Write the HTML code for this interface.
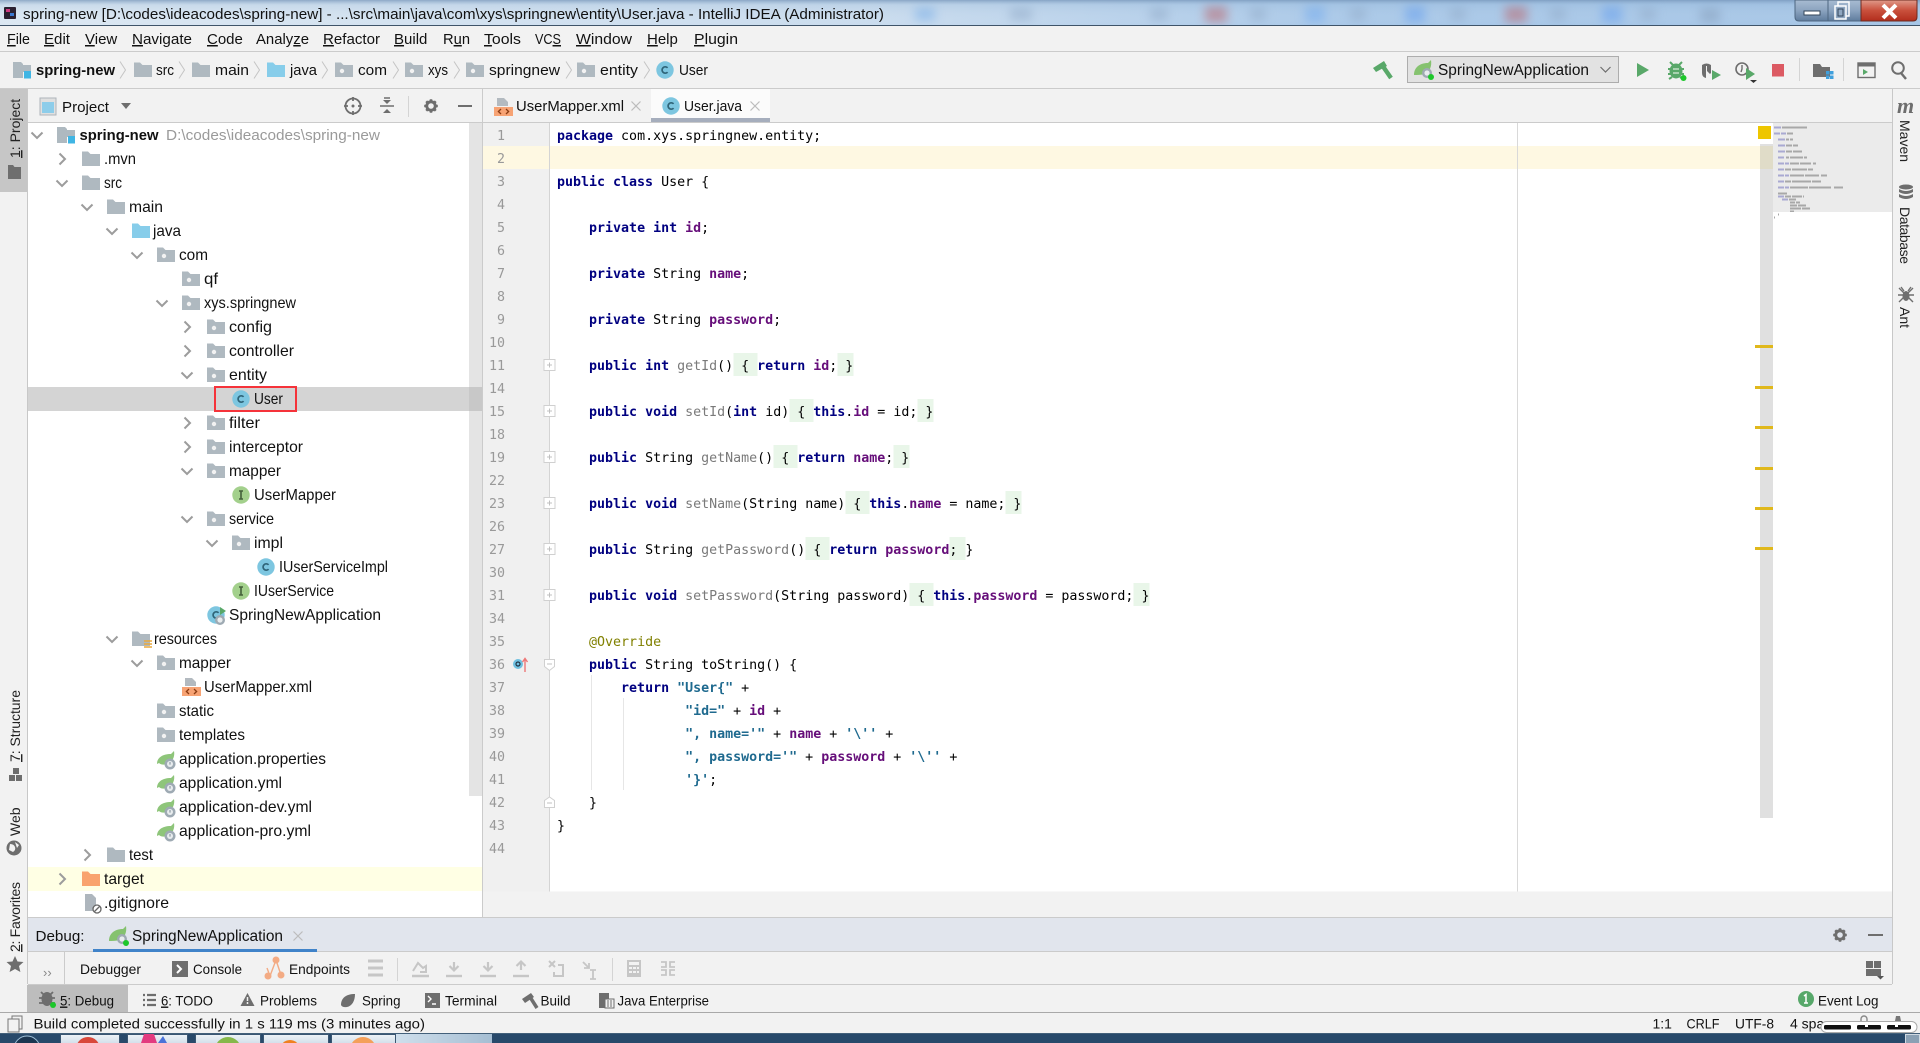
<!DOCTYPE html>
<html><head><meta charset="utf-8"><title>User.java - IntelliJ IDEA</title>
<style>
html,body{margin:0;padding:0;background:#f2f2f2;width:1920px;height:1043px;overflow:hidden}
svg{display:block;font-family:"Liberation Sans",sans-serif;font-size:16px;fill:#111}
.m{font-family:"DejaVu Sans Mono","Liberation Mono",monospace;font-size:13.3px;white-space:pre;fill:#000}
.n{font-family:"DejaVu Sans Mono","Liberation Mono",monospace;font-size:13.3px;fill:#999;text-anchor:end}
.k{fill:#000080;font-weight:bold}.f{fill:#660e7a;font-weight:bold}.s{fill:#1f6a8f;font-weight:bold}.g{fill:#7a7a7a}
.t14{font-size:14px}.t15{font-size:15px}.b{font-weight:bold}
.u{text-decoration:underline}
.v{font-size:14px;fill:#222}
</style></head><body>
<svg width="1920" height="1043" viewBox="0 0 1920 1043" xmlns="http://www.w3.org/2000/svg">
<defs>
<linearGradient id="tb" x1="0" x2="1" y1="0" y2="0"><stop offset="0" stop-color="#dbe7f2"/><stop offset=".45" stop-color="#cadcee"/><stop offset=".7" stop-color="#a9c8e8"/><stop offset="1" stop-color="#a5c5e6"/></linearGradient>
<linearGradient id="tt" x1="0" x2="0" y1="0" y2="1"><stop offset="0" stop-color="#6f8fb4" stop-opacity=".7"/><stop offset=".2" stop-color="#8fb0d0" stop-opacity=".2"/><stop offset="1" stop-color="#fff" stop-opacity="0"/></linearGradient>
<linearGradient id="wb" x1="0" x2="0" y1="0" y2="1"><stop offset="0" stop-color="#a8bcd2"/><stop offset=".5" stop-color="#8ba3bf"/><stop offset="1" stop-color="#5f7c9d"/></linearGradient>
<linearGradient id="wr" x1="0" x2="0" y1="0" y2="1"><stop offset="0" stop-color="#e09a8a"/><stop offset=".5" stop-color="#c9503c"/><stop offset="1" stop-color="#b22d1c"/></linearGradient>
<linearGradient id="tk" x1="0" x2="1" y1="0" y2="0"><stop offset="0" stop-color="#cfdfec"/><stop offset="1" stop-color="#a5bed3"/></linearGradient>
<linearGradient id="ti" x1="0" x2="0" y1="0" y2="1"><stop offset="0" stop-color="#eef3f7"/><stop offset="1" stop-color="#c9d8e6"/></linearGradient>
<filter id="bl" x="-50%" y="-50%" width="200%" height="200%"><feGaussianBlur stdDeviation="5"/></filter>

<path id="cd" d="M-5.5-2.500L0 3 5.500-2.500" fill="none" stroke="#9c9c9c" stroke-width="2"/>
<path id="cr" d="M-2.500-5.500L3 0-2.500 5.500" fill="none" stroke="#9c9c9c" stroke-width="2"/>
<path id="fo" d="M0-7.500h6l2.500 2.500h9.500V7H0z" fill="#afb9c0"/>
<g id="pk"><use href="#fo"/><circle cx="7" cy="1" r="2.200" fill="#f2f2f2"/></g>
<path id="jv" d="M0-7.500h6l2.500 2.500h9.500V7H0z" fill="#87cdea"/>
<path id="tg" d="M0-7.500h6l2.500 2.500h9.500V7H0z" fill="#f9a36e"/>
<g id="rs"><use href="#fo"/><path d="M12 2h8M12 5h8M12 8h8" stroke="#e8a93f" stroke-width="1.600"/></g>
<g id="cl"><circle cx="9" cy="0" r="8.700" fill="#7dc6e0"/><path d="M11.600-2.200A3.200 3.200 0 1 0 11.600 2.200" fill="none" stroke="#2f6478" stroke-width="1.700"/></g>
<g id="in"><circle cx="9" cy="0" r="8.700" fill="#a3d08c"/><path d="M7-4h4M9-4v8M7 4h4" stroke="#44603a" stroke-width="1.600" fill="none"/></g>
<g id="sp"><path d="M0 5C0-1 5-5 14-5c1-1 2-2 3-3 1 5-1 11-7 13-3 1-6 1-8-1z" fill="#8ec57a"/><circle cx="13" cy="5" r="5.500" fill="#9eaab3"/><circle cx="13" cy="5" r="3" fill="#e8ecee"/><path d="M13 3v2.600" stroke="#7d8b96" stroke-width="1"/></g>
<g id="xm"><path d="M3-9h7l4 4v4H3z" fill="#b3bac0"/><rect x="0" y="0" width="19" height="9" fill="#f7a374"/><path d="M7 2l-2.600 2.500L7 7M12 2l2.600 2.500L12 7" fill="none" stroke="#8a3b12" stroke-width="1.300"/></g>
<g id="gt"><path d="M3-9h7l4 4V8H3z" fill="#aeb6bd"/><circle cx="15" cy="6" r="4" fill="#fff" stroke="#666" stroke-width="1.300"/><path d="M12.500 8.500l5-5" stroke="#666" stroke-width="1.300"/></g>
<g id="pr"><path d="M0-8h8l2 2h0v14H0z" fill="#aeb9c0"/><path d="M8-5h10V2H8z" fill="#aeb9c0"/><rect x="11" y="1" width="7" height="7.500" fill="#3fb5e4"/></g>
<path id="nc" d="M-3-8.500L2.500 0-3 8.500" fill="none" stroke="#c4c4c4" stroke-width="1"/>
<path id="xx" d="M-4.500-4.500L4.500 4.500M-4.500 4.500L4.500-4.500" stroke="#bcbcbc" stroke-width="1.200" fill="none"/>
<g id="fp"><rect x="-5.500" y="-5.500" width="11" height="11" fill="#fff" stroke="#d0d0d0"/><path d="M-2.500 0h5M0-2.500v5" stroke="#c0c0c0"/></g>
<g id="spr"><path d="M-9 6C-9-1-4-6 5-6c1-1 2-2 3-3 1 6-1 12-7 14-3 1-7 1-10 1z" fill="#85c26f"/><circle cx="4" cy="4" r="5" fill="#9eaab3"/><circle cx="4" cy="4" r="2.600" fill="#e8ecee"/><circle cx="8" cy="8" r="3" fill="#1dc72b"/></g>
<g id="gear"><circle r="5" fill="none" stroke="#6e6e6e" stroke-width="3.400"/><path d="M0-8v3M0 8V5M-8 0h3M8 0H5M-5.600-5.600l2 2M5.600 5.600l-2-2M-5.600 5.600l2-2M5.600-5.600l-2 2" stroke="#6e6e6e" stroke-width="3"/></g>
<g id="dn"><path d="M0-8V0M-4.500-4L0 .5 4.500-4" fill="none" stroke="#c6c6c6" stroke-width="2.200"/><path d="M-8 6h16" stroke="#c6c6c6" stroke-width="2.400"/></g>
</defs>

<!-- backgrounds -->
<rect width="1920" height="1043" fill="#f2f2f2"/>
<!-- title bar -->
<rect width="1920" height="25" fill="url(#tb)"/>
<g filter="url(#bl)" opacity=".55">
<rect x="915" y="8" width="20" height="12" fill="#6ca7e8"/><rect x="1010" y="8" width="22" height="12" fill="#8aa4c4"/><rect x="1205" y="6" width="22" height="16" fill="#b85a60"/><rect x="1305" y="6" width="20" height="16" fill="#6ca7f0"/><rect x="1405" y="6" width="20" height="16" fill="#5c9af0"/><rect x="1505" y="6" width="22" height="16" fill="#b85a60"/><rect x="1602" y="6" width="20" height="16" fill="#5c9af0"/><rect x="1700" y="8" width="20" height="14" fill="#7f99b8"/><rect x="1150" y="8" width="18" height="12" fill="#8aa4c4"/><rect x="1250" y="8" width="16" height="12" fill="#8aa4c4"/><rect x="1350" y="8" width="16" height="12" fill="#8aa4c4"/><rect x="1450" y="8" width="16" height="12" fill="#8aa4c4"/><rect x="1550" y="8" width="16" height="12" fill="#8aa4c4"/><rect x="1640" y="8" width="16" height="12" fill="#8aa4c4"/>
</g>
<rect width="1920" height="25" fill="url(#tt)"/>
<rect y="25" width="1920" height="1" fill="#3f5469"/>
<rect x="4" y="7" width="12" height="12" rx="1" fill="#2a2030"/><rect x="6" y="9" width="4" height="3" fill="#d03a80"/><rect x="10" y="13" width="4" height="3" fill="#3a78d0"/>
<text x="23" y="19" class="t15" textLength="861" lengthAdjust="spacingAndGlyphs">spring-new [D:\codes\ideacodes\spring-new] - ...\src\main\java\com\xys\springnew\entity\User.java - IntelliJ IDEA (Administrator)</text>
<!-- window buttons -->
<path d="M1795 0V17q0 4 4 4H1861V0z" fill="url(#wb)" stroke="#4d6680"/>
<path d="M1861 0V21H1913q4 0 4-4V0z" fill="url(#wr)" stroke="#6d2a20"/>
<path d="M1828 0V21" stroke="#4d6680"/>
<rect x="1804" y="11" width="16" height="4" fill="#fff" stroke="#33465a"/>
<rect x="1838" y="2" width="11" height="14" fill="none" stroke="#fff" stroke-width="1.500"/><rect x="1835" y="6" width="11" height="13" fill="#8fa7c1" stroke="#fff" stroke-width="1.500"/><rect x="1838" y="9" width="5" height="7" fill="none" stroke="#33465a"/>
<path d="M1883 5l13 13M1896 5l-13 13" stroke="#fff" stroke-width="4" fill="none"/>

<!-- menu -->
<rect y="26" width="1920" height="25" fill="#f2f2f2"/>
<rect y="51" width="1920" height="1" fill="#cbcbcb"/>
<g class="t15">
<text x="7" y="44" textLength="23" lengthAdjust="spacingAndGlyphs"><tspan class="u">F</tspan>ile</text>
<text x="44" y="44" textLength="26" lengthAdjust="spacingAndGlyphs"><tspan class="u">E</tspan>dit</text>
<text x="85" y="44"><tspan class="u">V</tspan>iew</text>
<text x="132" y="44" textLength="60" lengthAdjust="spacingAndGlyphs"><tspan class="u">N</tspan>avigate</text>
<text x="207" y="44"><tspan class="u">C</tspan>ode</text>
<text x="256" y="44" textLength="53" lengthAdjust="spacingAndGlyphs">Analy<tspan class="u">z</tspan>e</text>
<text x="323" y="44" textLength="57" lengthAdjust="spacingAndGlyphs"><tspan class="u">R</tspan>efactor</text>
<text x="394" y="44"><tspan class="u">B</tspan>uild</text>
<text x="443" y="44" textLength="27" lengthAdjust="spacingAndGlyphs">R<tspan class="u">u</tspan>n</text>
<text x="484" y="44" textLength="37" lengthAdjust="spacingAndGlyphs"><tspan class="u">T</tspan>ools</text>
<text x="535" y="44" textLength="26" lengthAdjust="spacingAndGlyphs">VC<tspan class="u">S</tspan></text>
<text x="576" y="44" textLength="56" lengthAdjust="spacingAndGlyphs"><tspan class="u">W</tspan>indow</text>
<text x="647" y="44"><tspan class="u">H</tspan>elp</text>
<text x="694" y="44" textLength="44" lengthAdjust="spacingAndGlyphs"><tspan class="u">P</tspan>lugin</text>
</g>

<!-- navbar -->
<rect y="88" width="1920" height="1" fill="#cbcbcb"/>
<use href="#pr" x="13" y="70"/>
<text x="36" y="75" class="b" font-size="15" textLength="79" lengthAdjust="spacingAndGlyphs">spring-new</text>
<use href="#nc" x="123" y="70"/>
<use href="#fo" x="134" y="70"/><text x="156" y="75" font-size="15" textLength="18" lengthAdjust="spacingAndGlyphs">src</text>
<use href="#nc" x="182" y="70"/>
<use href="#fo" x="192" y="70"/><text x="215" y="75" font-size="15" textLength="34" lengthAdjust="spacingAndGlyphs">main</text>
<use href="#nc" x="257" y="70"/>
<use href="#jv" x="267" y="70"/><text x="290" y="75" font-size="15" textLength="27" lengthAdjust="spacingAndGlyphs">java</text>
<use href="#nc" x="325" y="70"/>
<use href="#pk" x="335" y="70"/><text x="358" y="75" font-size="15" textLength="29" lengthAdjust="spacingAndGlyphs">com</text>
<use href="#nc" x="396" y="70"/>
<use href="#pk" x="405" y="70"/><text x="428" y="75" font-size="15" textLength="20" lengthAdjust="spacingAndGlyphs">xys</text>
<use href="#nc" x="457" y="70"/>
<use href="#pk" x="466" y="70"/><text x="489" y="75" font-size="15" textLength="71" lengthAdjust="spacingAndGlyphs">springnew</text>
<use href="#nc" x="569" y="70"/>
<use href="#pk" x="577" y="70"/><text x="600" y="75" font-size="15" textLength="38" lengthAdjust="spacingAndGlyphs">entity</text>
<use href="#nc" x="647" y="70"/>
<use href="#cl" x="656" y="70"/><text x="679" y="75" font-size="15" textLength="29" lengthAdjust="spacingAndGlyphs">User</text>

<!-- nav right -->
<path d="M1382 65l9 13" stroke="#59a869" stroke-width="4.400" fill="none"/><path d="M1373 68l11-7 3 5-11 6z" fill="#59a869"/>
<rect x="1407.500" y="56.500" width="211" height="26" fill="#e2e2e2" stroke="#adadad"/>
<use href="#spr" x="1423" y="69"/>
<text x="1438" y="75" font-size="15.500" textLength="151" lengthAdjust="spacingAndGlyphs">SpringNewApplication</text>
<path d="M1600.500 67l5 5 5-5" fill="none" stroke="#6e6e6e" stroke-width="1.200"/>
<path d="M1637 63l12 7-12 7z" fill="#59a869"/>
<path d="M1670 62l3 3M1682 62l-3 3M1668 69h16M1668 74h16M1669 79l3-2M1683 79l-3-2" stroke="#59a869" stroke-width="2" fill="none"/><ellipse cx="1676" cy="71" rx="6.500" ry="7.500" fill="#59a869"/><path d="M1673 69h6M1673 73h6" stroke="#d8ecd9" stroke-width="1.300"/><circle cx="1683.500" cy="78" r="3" fill="#1dc72b"/>
<path d="M1702 65q4.500-3 9 0v8l-1 1-3-3v-5h-1v12q-4-1-4-5z" fill="#6e6e6e"/><path d="M1712 70l9 5-9 5z" fill="#59a869"/>
<circle cx="1742" cy="69" r="6" fill="none" stroke="#6e6e6e" stroke-width="1.600"/><path d="M1742 65v4l-1 3" fill="none" stroke="#6e6e6e" stroke-width="1.400"/><path d="M1746 68l9 6-9 6z" fill="#59a869"/><path d="M1750 80h7l-3.500 3z" fill="#333"/>
<rect x="1772" y="64" width="12" height="12.500" fill="#dc5a63"/>
<rect x="1799" y="58" width="1" height="23" fill="#d4d4d4"/>
<path d="M1813 64h7l2 3h8v10h-17z" fill="#6e6e6e"/><path d="M1826 71h3.500v3.500h-3.500zM1830 71h3.500v3.500h-3.500zM1826 75.500h3.500v3.500h-3.500zM1830 75.500h3.500v3.500h-3.500z" fill="#40a0dd"/>
<rect x="1843" y="58" width="1" height="23" fill="#d4d4d4"/>
<rect x="1858" y="63" width="17" height="14.500" fill="none" stroke="#6e6e6e" stroke-width="1.400"/><rect x="1858" y="63" width="17" height="3.500" fill="#6e6e6e"/><path d="M1863 69l5 3-5 3z" fill="#59a869"/>
<circle cx="1898" cy="68" r="5.800" fill="none" stroke="#6e6e6e" stroke-width="2"/><path d="M1901 73l5 6" stroke="#6e6e6e" stroke-width="2.400"/>

<!-- left stripe -->
<rect x="0" y="89" width="27" height="103" fill="#c6c6c6"/>
<rect x="27" y="89" width="1" height="895" fill="#c8c8c8"/>
<text class="v" transform="translate(20,158) rotate(-90)"><tspan class="u">1</tspan>: Project</text>
<path d="M8 165h5l1.500 2h6.500v12H8z" fill="#6e6e6e"/>
<text class="v" transform="translate(20,762) rotate(-90)" textLength="72"><tspan class="u">7</tspan>: Structure</text>
<path d="M13 768h6v6h-6zM9 775h6v6H9zM16 775h6v6h-6z" fill="#6e6e6e"/>
<text class="v" transform="translate(20,836) rotate(-90)">Web</text>
<circle cx="14" cy="848" r="7.500" fill="#6e6e6e"/><path d="M10 844q4 0 5 3t-2 5l-4-2zM15 842l4 3-2 3z" fill="#f2f2f2"/>
<text class="v" transform="translate(20,952) rotate(-90)" textLength="70"><tspan class="u">2</tspan>: Favorites</text>
<path d="M15 956l2.500 5.500 6 .5-4.500 4 1.400 6L15 969l-5.400 3 1.400-6-4.500-4 6-.5z" fill="#6e6e6e"/>

<!-- right stripe -->
<rect x="1892" y="89" width="1" height="895" fill="#c8c8c8"/>
<text x="1897" y="113" font-size="22" font-weight="bold" font-style="italic" style="font-family:'Liberation Serif',serif;fill:#6e6e6e">m</text>
<text class="v" transform="translate(1900,120) rotate(90)">Maven</text>
<g fill="#6e6e6e"><ellipse cx="1906" cy="187" rx="7" ry="2.500"/><path d="M1899 189q7 4 14 0v3q-7 4-14 0zM1899 194q7 4 14 0v3q-7 4-14 0z"/></g>
<text class="v" transform="translate(1900,207) rotate(90)" textLength="57">Database</text>
<g fill="#6e6e6e"><ellipse cx="1906" cy="296" rx="3.500" ry="5"/><path d="M1899 288l14 14M1913 288l-14 14M1898 295h16M1901 287l3 4M1911 287l-3 4" stroke="#6e6e6e" stroke-width="1.400"/></g>
<text class="v" transform="translate(1900,307) rotate(90)">Ant</text>

<!-- project header -->
<rect x="40" y="98" width="16" height="17" fill="#e0e0e0" stroke="#aeb4ba"/><rect x="42" y="102" width="12" height="11" fill="#8dcdea"/>
<text x="62" y="112" font-size="15" textLength="47" lengthAdjust="spacingAndGlyphs">Project</text>
<path d="M121 103h10l-5 6z" fill="#6e6e6e"/>
<circle cx="353" cy="106" r="7.500" fill="none" stroke="#6e6e6e" stroke-width="1.800"/><circle cx="353" cy="106" r="1.500" fill="#6e6e6e"/><path d="M353 97v4M353 111v4M344 106h4M358 106h4" stroke="#6e6e6e" stroke-width="1.800"/>
<path d="M380 106h14M384 98h6" stroke="#6e6e6e" stroke-width="1.600"/><path d="M383 100h8l-4 4zM383 113h8l-4-4z" fill="#6e6e6e"/>
<rect x="408" y="96" width="1" height="21" fill="#d4d4d4"/>
<g transform="translate(431,106) scale(.85)"><use href="#gear"/></g>
<rect x="458" y="105" width="14" height="2" fill="#6e6e6e"/>
<rect x="28" y="122" width="454" height="1" fill="#cbcbcb"/>
<!-- tree -->
<rect x="28" y="123" width="454" height="794" fill="#fff"/>
<rect x="469" y="123" width="13" height="673" fill="#e4e4e4"/>
<rect x="28" y="387" width="454" height="24" fill="#d4d4d4"/>
<rect x="469" y="387" width="13" height="24" fill="#c8c8c8"/>
<rect x="28" y="867" width="454" height="24" fill="#ffffe4"/>
<rect x="482" y="89" width="1" height="828" fill="#cbcbcb"/>
<g>
<use href="#cd" x="37" y="135"/><use href="#pr" x="57" y="135"/><text x="79.500" y="140" class="b" font-size="15" textLength="79" lengthAdjust="spacingAndGlyphs">spring-new</text><text x="166" y="140" font-size="15" fill="#9a9a9a" style="fill:#9a9a9a" textLength="214" lengthAdjust="spacingAndGlyphs">D:\codes\ideacodes\spring-new</text>
<use href="#cr" x="62" y="159"/><use href="#fo" x="82" y="159"/><text x="104" y="164" textLength="32" lengthAdjust="spacingAndGlyphs">.mvn</text>
<use href="#cd" x="62" y="183"/><use href="#fo" x="82" y="183"/><text x="104" y="188" textLength="18" lengthAdjust="spacingAndGlyphs">src</text>
<use href="#cd" x="87" y="207"/><use href="#fo" x="107" y="207"/><text x="129" y="212" textLength="34" lengthAdjust="spacingAndGlyphs">main</text>
<use href="#cd" x="112" y="231"/><use href="#jv" x="132" y="231"/><text x="153" y="236" textLength="28" lengthAdjust="spacingAndGlyphs">java</text>
<use href="#cd" x="137" y="255"/><use href="#pk" x="157" y="255"/><text x="179" y="260" textLength="29" lengthAdjust="spacingAndGlyphs">com</text>
<use href="#pk" x="182" y="279"/><text x="204" y="284" textLength="14" lengthAdjust="spacingAndGlyphs">qf</text>
<use href="#cd" x="162" y="303"/><use href="#pk" x="182" y="303"/><text x="204" y="308" textLength="92" lengthAdjust="spacingAndGlyphs">xys.springnew</text>
<use href="#cr" x="187" y="327"/><use href="#pk" x="207" y="327"/><text x="229" y="332" textLength="43" lengthAdjust="spacingAndGlyphs">config</text>
<use href="#cr" x="187" y="351"/><use href="#pk" x="207" y="351"/><text x="229" y="356" textLength="65" lengthAdjust="spacingAndGlyphs">controller</text>
<use href="#cd" x="187" y="375"/><use href="#pk" x="207" y="375"/><text x="229" y="380" textLength="38" lengthAdjust="spacingAndGlyphs">entity</text>
<use href="#cl" x="232" y="399"/><text x="254" y="404" textLength="29" lengthAdjust="spacingAndGlyphs">User</text>
<use href="#cr" x="187" y="423"/><use href="#pk" x="207" y="423"/><text x="229" y="428" textLength="31" lengthAdjust="spacingAndGlyphs">filter</text>
<use href="#cr" x="187" y="447"/><use href="#pk" x="207" y="447"/><text x="229" y="452" textLength="74" lengthAdjust="spacingAndGlyphs">interceptor</text>
<use href="#cd" x="187" y="471"/><use href="#pk" x="207" y="471"/><text x="229" y="476" textLength="52" lengthAdjust="spacingAndGlyphs">mapper</text>
<use href="#in" x="232" y="495"/><text x="254" y="500" textLength="82" lengthAdjust="spacingAndGlyphs">UserMapper</text>
<use href="#cd" x="187" y="519"/><use href="#pk" x="207" y="519"/><text x="229" y="524" textLength="45" lengthAdjust="spacingAndGlyphs">service</text>
<use href="#cd" x="212" y="543"/><use href="#pk" x="232" y="543"/><text x="254" y="548" textLength="29" lengthAdjust="spacingAndGlyphs">impl</text>
<use href="#cl" x="257" y="567"/><text x="279" y="572" textLength="109" lengthAdjust="spacingAndGlyphs">IUserServiceImpl</text>
<use href="#in" x="232" y="591"/><text x="254" y="596" textLength="80" lengthAdjust="spacingAndGlyphs">IUserService</text>
<use href="#cl" x="207" y="615"/><path d="M220 607l6 4-6 4z" fill="#59a869"/><circle cx="220" cy="620" r="5" fill="#9eaab3"/><circle cx="220" cy="620" r="2.600" fill="#e8ecee"/><text x="229" y="620" textLength="152" lengthAdjust="spacingAndGlyphs">SpringNewApplication</text>
<use href="#cd" x="112" y="639"/><use href="#rs" x="132" y="639"/><text x="154" y="644" textLength="63" lengthAdjust="spacingAndGlyphs">resources</text>
<use href="#cd" x="137" y="663"/><use href="#pk" x="157" y="663"/><text x="179" y="668" textLength="52" lengthAdjust="spacingAndGlyphs">mapper</text>
<use href="#xm" x="182" y="687"/><text x="204" y="692" textLength="108" lengthAdjust="spacingAndGlyphs">UserMapper.xml</text>
<use href="#pk" x="157" y="711"/><text x="179" y="716" textLength="35" lengthAdjust="spacingAndGlyphs">static</text>
<use href="#pk" x="157" y="735"/><text x="179" y="740" textLength="66" lengthAdjust="spacingAndGlyphs">templates</text>
<use href="#sp" x="157" y="759"/><text x="179" y="764" textLength="147" lengthAdjust="spacingAndGlyphs">application.properties</text>
<use href="#sp" x="157" y="783"/><text x="179" y="788" textLength="103" lengthAdjust="spacingAndGlyphs">application.yml</text>
<use href="#sp" x="157" y="807"/><text x="179" y="812" textLength="133" lengthAdjust="spacingAndGlyphs">application-dev.yml</text>
<use href="#sp" x="157" y="831"/><text x="179" y="836" textLength="132" lengthAdjust="spacingAndGlyphs">application-pro.yml</text>
<use href="#cr" x="87" y="855"/><use href="#fo" x="107" y="855"/><text x="129" y="860" textLength="24" lengthAdjust="spacingAndGlyphs">test</text>
<use href="#cr" x="62" y="879"/><use href="#tg" x="82" y="879"/><text x="104" y="884" textLength="40" lengthAdjust="spacingAndGlyphs">target</text>
<use href="#gt" x="82" y="903"/><text x="104" y="908" textLength="65" lengthAdjust="spacingAndGlyphs">.gitignore</text>
</g>
<rect x="215" y="387" width="81" height="24" fill="none" stroke="#f5333a" stroke-width="2"/>

<!-- editor tabs -->
<use href="#xm" x="494" y="107"/>
<text x="516" y="111" font-size="15" textLength="108" lengthAdjust="spacingAndGlyphs">UserMapper.xml</text>
<use href="#xx" x="636" y="106"/>
<rect x="651" y="89" width="119" height="29" fill="#fbfbfb"/>
<rect x="651" y="118" width="119" height="4.500" fill="#a6aebd"/>
<use href="#cl" x="662" y="106"/>
<text x="684" y="111" font-size="15" textLength="58" lengthAdjust="spacingAndGlyphs">User.java</text>
<use href="#xx" x="755" y="106"/>
<rect x="483" y="122" width="1409" height="1" fill="#cbcbcb"/>

<!-- editor -->
<rect x="483" y="123" width="1409" height="768.500" fill="#fff"/>
<rect x="483" y="123" width="66" height="768.500" fill="#f0f0f0"/>
<rect x="549" y="123" width="1" height="768.500" fill="#d4d4d4"/>
<rect x="483" y="146" width="66" height="23" fill="#fef8e2"/>
<rect x="550" y="146" width="1210" height="23" fill="#fef8e2"/>
<rect x="1517" y="123" width="1" height="768.500" fill="#d9d9d9"/>
<!-- folded green bgs -->
<g fill="#e9f6e9">
<rect x="733.500" y="353" width="24" height="23"/><rect x="837.500" y="353" width="16" height="23"/>
<rect x="789.500" y="399" width="24" height="23"/><rect x="917.500" y="399" width="16" height="23"/>
<rect x="773.500" y="445" width="24" height="23"/><rect x="893.500" y="445" width="16" height="23"/>
<rect x="845.500" y="491" width="24" height="23"/><rect x="1005.500" y="491" width="16" height="23"/>
<rect x="805.500" y="537" width="24" height="23"/><rect x="949.500" y="537" width="16" height="23"/>
<rect x="909.500" y="583" width="24" height="23"/><rect x="1133.500" y="583" width="16" height="23"/>
</g>
<rect x="591" y="675" width="1" height="115" fill="#e6e6e6"/><rect x="623" y="698" width="1" height="92" fill="#e6e6e6"/>
<!-- line numbers -->
<g>
<text class="n" x="505" y="140">1</text><text class="n" x="505" y="163">2</text><text class="n" x="505" y="186">3</text><text class="n" x="505" y="209">4</text><text class="n" x="505" y="232">5</text><text class="n" x="505" y="255">6</text><text class="n" x="505" y="278">7</text><text class="n" x="505" y="301">8</text><text class="n" x="505" y="324">9</text><text class="n" x="505" y="347">10</text><text class="n" x="505" y="370">11</text><text class="n" x="505" y="393">14</text><text class="n" x="505" y="416">15</text><text class="n" x="505" y="439">18</text><text class="n" x="505" y="462">19</text><text class="n" x="505" y="485">22</text><text class="n" x="505" y="508">23</text><text class="n" x="505" y="531">26</text><text class="n" x="505" y="554">27</text><text class="n" x="505" y="577">30</text><text class="n" x="505" y="600">31</text><text class="n" x="505" y="623">34</text><text class="n" x="505" y="646">35</text><text class="n" x="505" y="669">36</text><text class="n" x="505" y="692">37</text><text class="n" x="505" y="715">38</text><text class="n" x="505" y="738">39</text><text class="n" x="505" y="761">40</text><text class="n" x="505" y="784">41</text><text class="n" x="505" y="807">42</text><text class="n" x="505" y="830">43</text><text class="n" x="505" y="853">44</text>
</g>
<!-- fold marks -->
<use href="#fp" x="549.500" y="365"/><use href="#fp" x="549.500" y="411"/><use href="#fp" x="549.500" y="457"/><use href="#fp" x="549.500" y="503"/><use href="#fp" x="549.500" y="549"/><use href="#fp" x="549.500" y="595"/>
<path d="M544.500 659.500h10v7l-5 4-5-4z" fill="#fff" stroke="#d0d0d0"/><path d="M547 664h5" stroke="#c0c0c0"/>
<path d="M544.500 807.500v-7l5-3.500 5 3.500v7z" fill="#fff" stroke="#d0d0d0"/><path d="M547 803h5" stroke="#c0c0c0"/>
<circle cx="518" cy="664" r="5" fill="#6fc0e0"/><circle cx="518" cy="664" r="2" fill="none" stroke="#234" stroke-width="1.200"/><path d="M525 672v-13M522.500 662l2.500-3.500 2.500 3.500" fill="none" stroke="#e77" stroke-width="1.400"/>
<!-- code -->
<g class="m">
<text class="m" x="557" y="140"><tspan class="k">package</tspan> com.xys.springnew.entity;</text>
<text class="m" x="557" y="186"><tspan class="k">public class</tspan> User {</text>
<text class="m" x="557" y="232">    <tspan class="k">private int</tspan> <tspan class="f">id</tspan>;</text>
<text class="m" x="557" y="278">    <tspan class="k">private</tspan> String <tspan class="f">name</tspan>;</text>
<text class="m" x="557" y="324">    <tspan class="k">private</tspan> String <tspan class="f">password</tspan>;</text>
<text class="m" x="557" y="370">    <tspan class="k">public int</tspan> <tspan class="g">getId</tspan>() { <tspan class="k">return</tspan> <tspan class="f">id</tspan>; }</text>
<text class="m" x="557" y="416">    <tspan class="k">public void</tspan> <tspan class="g">setId</tspan>(<tspan class="k">int</tspan> id) { <tspan class="k">this</tspan>.<tspan class="f">id</tspan> = id; }</text>
<text class="m" x="557" y="462">    <tspan class="k">public</tspan> String <tspan class="g">getName</tspan>() { <tspan class="k">return</tspan> <tspan class="f">name</tspan>; }</text>
<text class="m" x="557" y="508">    <tspan class="k">public void</tspan> <tspan class="g">setName</tspan>(String name) { <tspan class="k">this</tspan>.<tspan class="f">name</tspan> = name; }</text>
<text class="m" x="557" y="554">    <tspan class="k">public</tspan> String <tspan class="g">getPassword</tspan>() { <tspan class="k">return</tspan> <tspan class="f">password</tspan>; }</text>
<text class="m" x="557" y="600">    <tspan class="k">public void</tspan> <tspan class="g">setPassword</tspan>(String password) { <tspan class="k">this</tspan>.<tspan class="f">password</tspan> = password; }</text>
<text class="m" x="557" y="646">    <tspan style="fill:#808000">@Override</tspan></text>
<text class="m" x="557" y="669">    <tspan class="k">public</tspan> String toString() {</text>
<text class="m" x="557" y="692">        <tspan class="k">return</tspan> <tspan class="s">"User{"</tspan> +</text>
<text class="m" x="557" y="715">                <tspan class="s">"id="</tspan> + <tspan class="f">id</tspan> +</text>
<text class="m" x="557" y="738">                <tspan class="s">", name='"</tspan> + <tspan class="f">name</tspan> + <tspan class="s">'\''</tspan> +</text>
<text class="m" x="557" y="761">                <tspan class="s">", password='"</tspan> + <tspan class="f">password</tspan> + <tspan class="s">'\''</tspan> +</text>
<text class="m" x="557" y="784">                <tspan class="s">'}'</tspan>;</text>
<text class="m" x="557" y="807">    }</text>
<text class="m" x="557" y="830">}</text>
</g>

<!-- editor scrollbar + minimap -->
<rect x="1773" y="123" width="119" height="89" fill="#ebebeb"/>
<rect x="1760" y="144" width="13" height="674" fill="#e0e0e0"/>
<rect x="1760" y="146" width="13" height="23" fill="#e0dcc8"/>
<rect x="1758" y="126" width="13" height="13" fill="#eec600"/>
<g fill="#e0b81c"><rect x="1755" y="345" width="18" height="3"/><rect x="1755" y="386" width="18" height="3"/><rect x="1755" y="426" width="18" height="3"/><rect x="1755" y="467" width="18" height="3"/><rect x="1755" y="507" width="18" height="3"/><rect x="1755" y="547" width="18" height="3"/></g>
<g fill="#a9a9d2">
<rect x="1774" y="126.500" width="7" height="2"/><rect x="1774" y="132.500" width="6" height="2"/><rect x="1781" y="132.500" width="5" height="2"/><rect x="1778" y="138.500" width="7" height="2"/><rect x="1778" y="144.500" width="7" height="2"/><rect x="1778" y="150.500" width="7" height="2"/><rect x="1778" y="156.500" width="6" height="2"/><rect x="1778" y="162.500" width="6" height="2"/><rect x="1785" y="162.500" width="4" height="2"/><rect x="1778" y="168.500" width="6" height="2"/><rect x="1778" y="174.500" width="6" height="2"/><rect x="1785" y="174.500" width="4" height="2"/><rect x="1778" y="180.500" width="6" height="2"/><rect x="1778" y="186.500" width="6" height="2"/><rect x="1785" y="186.500" width="4" height="2"/><rect x="1778" y="195.500" width="6" height="2"/><rect x="1782" y="198.500" width="6" height="2"/>
</g>
<g fill="#a8a8a8">
<rect x="1782" y="126.500" width="25" height="2"/><rect x="1787" y="132.500" width="5" height="2"/><rect x="1792" y="132.500" width="1" height="2"/><rect x="1786" y="138.500" width="3" height="2"/><rect x="1790" y="138.500" width="3" height="2"/><rect x="1786" y="144.500" width="6" height="2"/><rect x="1793" y="144.500" width="5" height="2"/><rect x="1786" y="150.500" width="6" height="2"/><rect x="1793" y="150.500" width="9" height="2"/><rect x="1786" y="156.500" width="3" height="2"/><rect x="1790" y="156.500" width="13" height="2"/><rect x="1804" y="156.500" width="3" height="2"/><rect x="1790" y="162.500" width="9" height="2"/><rect x="1800" y="162.500" width="11" height="2"/><rect x="1813" y="162.500" width="3" height="2"/><rect x="1785" y="168.500" width="6" height="2"/><rect x="1792" y="168.500" width="15" height="2"/><rect x="1808" y="168.500" width="5" height="2"/><rect x="1790" y="174.500" width="14" height="2"/><rect x="1805" y="174.500" width="14" height="2"/><rect x="1821" y="174.500" width="6" height="2"/><rect x="1785" y="180.500" width="6" height="2"/><rect x="1792" y="180.500" width="19" height="2"/><rect x="1812" y="180.500" width="9" height="2"/><rect x="1790" y="186.500" width="18" height="2"/><rect x="1809" y="186.500" width="22" height="2"/><rect x="1834" y="186.500" width="9" height="2"/><rect x="1778" y="192.500" width="9" height="2"/><rect x="1785" y="195.500" width="6" height="2"/><rect x="1792" y="195.500" width="10" height="2"/><rect x="1803" y="195.500" width="1" height="2"/><rect x="1789" y="198.500" width="7" height="2"/><rect x="1790" y="201.500" width="5" height="2"/><rect x="1796" y="201.500" width="4" height="2"/><rect x="1790" y="204.500" width="7" height="2"/><rect x="1798" y="204.500" width="8" height="2"/><rect x="1790" y="207.500" width="11" height="2"/><rect x="1802" y="207.500" width="8" height="2"/><rect x="1790" y="210.500" width="4" height="1.500"/><rect x="1778" y="213.500" width="1" height="2"/><rect x="1774" y="216.500" width="1" height="2"/>
</g>

<!-- lower divider -->
<rect x="28" y="917" width="1864" height="1" fill="#cbcbcb"/>
<!-- debug header -->
<rect x="28" y="918" width="1864" height="33" fill="#e1e5ed"/>
<rect x="28" y="951" width="1864" height="1" fill="#cbcbcb"/>
<text x="35.500" y="941" font-size="15" textLength="49" lengthAdjust="spacingAndGlyphs">Debug:</text>
<use href="#spr" x="118" y="935"/>
<text x="132" y="941" font-size="15.500" textLength="151" lengthAdjust="spacingAndGlyphs">SpringNewApplication</text>
<use href="#xx" x="298" y="936"/>
<rect x="93" y="949" width="224" height="3" fill="#4083c9"/>
<g transform="translate(1840,935) scale(.85)"><use href="#gear"/></g>
<rect x="1868" y="934" width="15" height="2" fill="#6e6e6e"/>

<!-- debug toolbar -->
<rect x="28" y="984" width="1864" height="1" fill="#cbcbcb"/>
<text x="43" y="977" font-size="13" style="fill:#888">››</text>
<rect x="64" y="952" width="1" height="32" fill="#cbcbcb"/>
<text x="80" y="974" class="t14" textLength="61" lengthAdjust="spacingAndGlyphs">Debugger</text>
<rect x="172" y="961" width="16" height="16" fill="#6e6e6e"/><path d="M177 965l4 4-4 4" fill="none" stroke="#fff" stroke-width="2"/>
<text x="193" y="974" class="t14" textLength="49" lengthAdjust="spacingAndGlyphs">Console</text>
<g fill="#f3ab84"><circle cx="276" cy="960" r="3.500"/><circle cx="268" cy="976" r="3.500"/><circle cx="281" cy="975" r="3.500"/></g><path d="M267 968l3 8 6-16 5 15" fill="none" stroke="#f3ab84" stroke-width="1.400"/>
<text x="289" y="974" class="t14" textLength="61" lengthAdjust="spacingAndGlyphs">Endpoints</text>
<path d="M368 961h15M368 968h15M368 975h15" stroke="#c6c6c6" stroke-width="3"/>
<rect x="397" y="958" width="1" height="23" fill="#d4d4d4"/>
<path d="M413 971l5-8 5 5 3-2v6h-6" fill="none" stroke="#c6c6c6" stroke-width="2"/><path d="M412 976h17" stroke="#c6c6c6" stroke-width="2.400"/>
<use href="#dn" x="454" y="970"/><use href="#dn" x="488" y="970"/>
<g transform="translate(521,970)"><path d="M0 0V-8M-4.500-4L0-8.500 4.500-4" fill="none" stroke="#c6c6c6" stroke-width="2.200"/><path d="M-8 6h16" stroke="#c6c6c6" stroke-width="2.400"/></g>
<path d="M549 961l6 6M555 961l-6 6M558 965h5v11h-9v-4" fill="none" stroke="#c6c6c6" stroke-width="2"/>
<path d="M583 962l6 6M589 963v5h-5M590 970h6M593 970v9M590 979h6" fill="none" stroke="#c6c6c6" stroke-width="1.800"/>
<rect x="612" y="958" width="1" height="23" fill="#d4d4d4"/>
<rect x="627" y="960" width="14" height="17" fill="#c6c6c6"/><rect x="629" y="962" width="10" height="3" fill="#f2f2f2"/><path d="M629 968h3M633 968h3M637 968h2M629 972h3M633 972h3M637 972h2" stroke="#f2f2f2" stroke-width="2"/>
<path d="M661 962h5v5h-5M675 962h-5v5h5M661 975h5v-5h-5M675 975h-5v-5h5" fill="none" stroke="#c6c6c6" stroke-width="1.800"/>
<rect x="1866" y="961" width="7" height="7" fill="#6e6e6e"/><rect x="1874" y="961" width="7" height="7" fill="#6e6e6e"/><rect x="1866" y="969" width="15" height="7" fill="#6e6e6e"/><path d="M1877 976h7l-3.500 3.500z" fill="#555"/>

<!-- bottom tool bar -->
<rect x="27" y="985" width="101" height="27" fill="#bdbdbd"/>
<rect y="1012" width="1920" height="1" fill="#a9a9a9"/>
<g fill="#6e6e6e"><ellipse cx="47" cy="999" rx="5.500" ry="7"/><path d="M41 992l3 3M53 992l-3 3M39 998h16M39 1003h16" stroke="#6e6e6e" stroke-width="1.800"/></g><circle cx="53" cy="1005" r="3" fill="#1dc72b"/>
<text x="60" y="1005.500" class="t14" textLength="54" lengthAdjust="spacingAndGlyphs"><tspan class="u">5</tspan>: Debug</text>
<path d="M143 995h2M147 995h9M143 1000h2M147 1000h9M143 1005h2M147 1005h9" stroke="#6e6e6e" stroke-width="2.200"/>
<text x="161" y="1005.500" class="t14" textLength="52" lengthAdjust="spacingAndGlyphs"><tspan class="u">6</tspan>: TODO</text>
<path d="M247.500 993l7 13h-14z" fill="#6e6e6e"/><path d="M247.500 997v4M247.500 1002v2" stroke="#f2f2f2" stroke-width="1.500"/>
<text x="260" y="1005.500" class="t14" textLength="57" lengthAdjust="spacingAndGlyphs">Problems</text>
<path d="M341 1005c0-7 5-11 14-11 0 7-3 12-8 13-3 .5-5 0-6-2z" fill="#6e6e6e"/>
<text x="362" y="1005.500" class="t14" textLength="38.500" lengthAdjust="spacingAndGlyphs">Spring</text>
<rect x="425" y="993" width="15" height="15" fill="#6e6e6e"/><path d="M428 996l3 3-3 3M432 1004h4" stroke="#fff" stroke-width="1.400" fill="none"/>
<text x="445" y="1005.500" class="t14" textLength="52" lengthAdjust="spacingAndGlyphs">Terminal</text>
<path d="M530 997l7 11" stroke="#6e6e6e" stroke-width="3.500"/><path d="M522 999l9-6 3 4-9 6z" fill="#6e6e6e"/>
<text x="540.500" y="1005.500" class="t14" textLength="30" lengthAdjust="spacingAndGlyphs">Build</text>
<rect x="599" y="993" width="10" height="15" fill="#6e6e6e"/><rect x="605" y="999" width="9" height="9" fill="#f2f2f2" stroke="#6e6e6e"/><path d="M608 1000v7M611 1000v7" stroke="#6e6e6e"/>
<text x="617.500" y="1005.500" class="t14" textLength="91.500" lengthAdjust="spacingAndGlyphs">Java Enterprise</text>
<circle cx="1806" cy="999" r="8" fill="#57a86a"/><path d="M1804 996l2-1.500v8M1804 1003h4" stroke="#fff" stroke-width="1.500" fill="none"/>
<text x="1818" y="1005.500" class="t14" textLength="60.500" lengthAdjust="spacingAndGlyphs">Event Log</text>

<!-- status -->
<rect x="8" y="1019" width="11" height="13" fill="#f2f2f2" stroke="#777"/><path d="M12 1019v-3h10v13h-3" fill="none" stroke="#777"/>
<text x="33.500" y="1028.500" class="t14" textLength="391.500" lengthAdjust="spacingAndGlyphs">Build completed successfully in 1 s 119 ms (3 minutes ago)</text>
<text x="1652.500" y="1028.500" class="t14">1:1</text>
<text x="1686.500" y="1028.500" class="t14" textLength="33" lengthAdjust="spacingAndGlyphs">CRLF</text>
<text x="1735" y="1028.500" class="t14" textLength="39" lengthAdjust="spacingAndGlyphs">UTF-8</text>
<text x="1790" y="1028.500" class="t14">4 spaces</text>
<path d="M1861 1022v-3a3 3 0 0 1 6 0v3" fill="none" stroke="#888" stroke-width="1.400"/>
<path d="M1895 1021l1-5h4l1 5z" fill="#777"/>
<rect x="1821" y="1021.500" width="96" height="11" rx="5.500" fill="#fff" stroke="#aaa"/>
<rect x="1824" y="1025" width="27" height="4.500" rx="1.500" fill="#111"/><rect x="1857" y="1025" width="24" height="4.500" rx="1.500" fill="#111"/><rect x="1887" y="1025" width="24" height="4.500" rx="1.500" fill="#111"/><rect x="1865" y="1024" width="3" height="3" fill="#fff"/><rect x="1895" y="1024" width="3" height="3" fill="#fff"/>

<!-- taskbar -->
<rect y="1034" width="1920" height="9" fill="#28496a"/>
<rect y="1033" width="1920" height="1" fill="#43607a"/>
<rect x="396" y="1034" width="96" height="9" fill="url(#tk)"/>
<circle cx="27" cy="1049" r="13" fill="#1b3550" stroke="#9fc0d8"/>
<g fill="url(#ti)" stroke="#3a5672">
<rect x="60.500" y="1034.500" width="59" height="12"/><rect x="127.500" y="1034.500" width="60" height="12"/><rect x="195.500" y="1034.500" width="65" height="12"/><rect x="263.500" y="1034.500" width="65" height="12"/><rect x="331.500" y="1034.500" width="64" height="12"/>
</g>
<circle cx="88" cy="1049" r="12" fill="#d9483b"/>
<path d="M141 1043l3-9h10l3 9z" fill="#e33b7f"/><path d="M158 1043l5-7 4 7z" fill="#4a72d8"/>
<circle cx="228" cy="1050" r="13" fill="#86b84a"/>
<circle cx="290" cy="1050" r="10" fill="#f08020"/><circle cx="304" cy="1049" r="6" fill="#7eb54a"/>
<circle cx="363" cy="1050" r="13" fill="#f4a05a"/>
<rect x="1905.500" y="1034.500" width="14" height="9" fill="#8aa0b4" stroke="#cfd9e2"/>
</svg>
</body></html>
